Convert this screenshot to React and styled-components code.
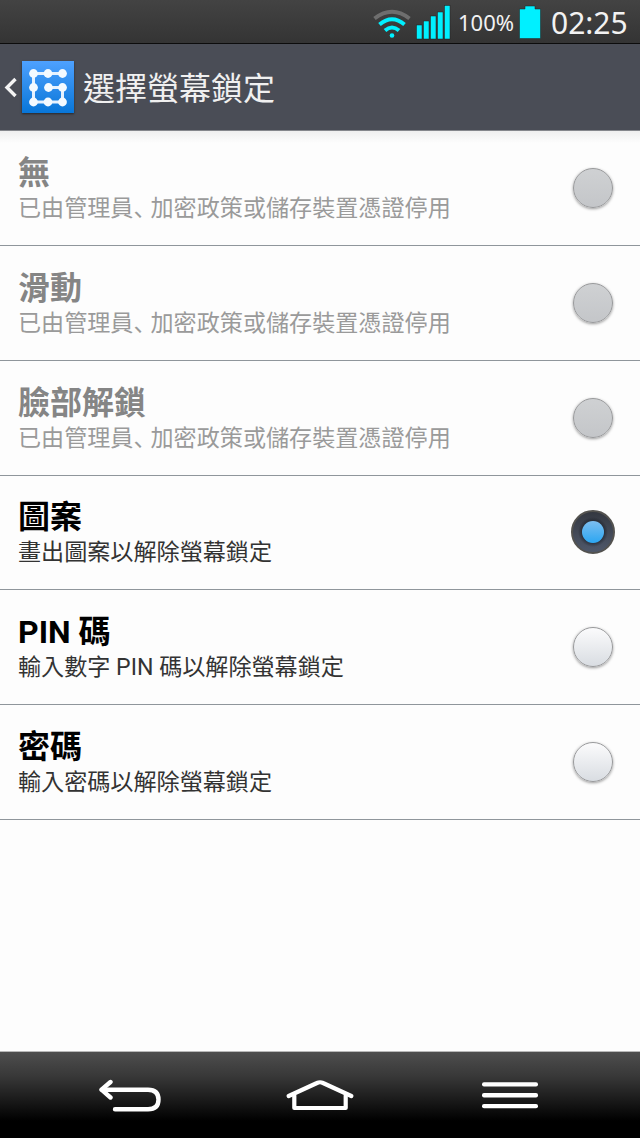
import React from "react";
import styled, { createGlobalStyle, css } from "styled-components";

const options = [
    { id: "none", title: "無", disabled: true },
    { id: "swipe", title: "滑動", disabled: true },
    { id: "face", title: "臉部解鎖", disabled: true },
    { id: "pattern", title: "圖案", summary: "畫出圖案以解除螢幕鎖定", checked: true },
    { id: "pin", title: "PIN 碼", summary: "輸入數字 PIN 碼以解除螢幕鎖定" },
    { id: "password", title: "密碼", summary: "輸入密碼以解除螢幕鎖定" },
];

const App = () => {
    return (
        <>
            <GlobalStyle />
            <Screen>
                <StatusBar>
                    <WifiIcon />
                    <SignalIcon />
                    <Percent>100%</Percent>
                    <BatteryIcon />
                    <Clock>02:25</Clock>
                </StatusBar>
                <Header>
                    <BackArrow />
                    <PatternLogo />
                    <h1>選擇螢幕鎖定</h1>
                </Header>
                <List>
                    {options.map((option) => (
                        <Row key={option.id}>
                            <Label>
                                <Title $disabled={option.disabled}>{option.title}</Title>
                                <Summary $disabled={option.disabled}>
                                    {option.disabled ? (
                                        <>已由管理員<Comma>、</Comma>加密政策或儲存裝置憑證停用</>
                                    ) : (
                                        option.summary
                                    )}
                                </Summary>
                            </Label>
                            <Radio $disabled={option.disabled} $checked={option.checked} />
                        </Row>
                    ))}
                </List>
                <NavBar>
                    <NavIcons />
                </NavBar>
            </Screen>
        </>
    );
};

const WifiIcon = () => (
    <svg width="40" height="32" viewBox="0 0 40 32" fill="none" strokeWidth="4">
        <path d="M2.5 12.5 Q20 -1 37.5 12.5" stroke="#6e6e6e" />
        <path d="M7.5 18.5 Q20 8 32.5 18.5" stroke="#00f0ff" />
        <path d="M13 24.5 Q20 18.5 27 24.5" stroke="#00f0ff" />
        <circle cx="20" cy="29.5" r="2.3" fill="#00f0ff" />
    </svg>
);

const SignalIcon = () => (
    <svg width="36" height="36" viewBox="0 0 36 36" fill="#00f0ff" stroke="#222" strokeWidth="0.5">
        <rect x="0.5" y="21" width="5.5" height="14" />
        <rect x="7.5" y="17" width="5.5" height="18" />
        <rect x="14.5" y="12" width="5.5" height="23" />
        <rect x="21.5" y="8" width="5.5" height="27" />
        <rect x="28.5" y="1.5" width="5.5" height="33.5" />
    </svg>
);

const BatteryIcon = () => (
    <svg width="22" height="34" viewBox="0 0 22 34">
        <path d="M6 1H16V4H21.5V33.5H.5V4H6Z" fill="#00f0ff" stroke="#222" strokeWidth="0.5" />
    </svg>
);

const BackArrow = () => (
    <svg width="14" height="22" viewBox="0 0 14 22" fill="none">
        <path d="M12.5 3L4 11.5L12.5 20" stroke="#f4f4f4" strokeWidth="3.4" />
    </svg>
);

const dots = [
    [11.5, 12.5], [26, 12.5], [40.5, 12.5],
    [11.5, 26.5], [26.5, 26.5], [40.5, 26.5],
    [11.5, 41], [26, 41], [40.5, 41],
];

const PatternLogo = () => (
    <Logo viewBox="0 0 52 52">
        <defs>
            <linearGradient id="tile" x1="0" y1="0" x2="0" y2="1">
                <stop offset="0" stopColor="#4ea1ff" />
                <stop offset="1" stopColor="#0876d8" />
            </linearGradient>
        </defs>
        <rect width="52" height="52" fill="url(#tile)" />
        <path
            d="M40.5 12.5H11.5V41H40.5V26.5H26.5"
            fill="none"
            stroke="#e6f2ff"
            strokeWidth="3"
        />
        {dots.map(([x, y]) => (
            <circle key={`${x}-${y}`} cx={x} cy={y} r="4.4" fill="#f4faff" />
        ))}
    </Logo>
);

const NavIcons = () => (
    <>
        <svg width="64" height="34" viewBox="0 0 64 34" fill="none" stroke="#fff" strokeWidth="4.4" strokeLinecap="round" strokeLinejoin="round">
            <path d="M12.5 3L3.5 10.7L12.5 18.5" />
            <path d="M4 10.7H50Q60.5 10.7 60.5 20.5Q60.5 30.3 50 30.3H17" />
        </svg>
        <svg width="68" height="34" viewBox="0 0 68 34" fill="none" stroke="#fff" strokeWidth="4.2" strokeLinecap="round" strokeLinejoin="round">
            <path d="M2.7 17L31 4Q34 2.5 37 4L65.3 17" />
            <path d="M8.3 16.5V29H59.7V16.5" />
        </svg>
        <svg width="56" height="34" viewBox="0 0 56 34" fill="#fff">
            <rect y="3.3" width="56" height="4.3" rx="2" />
            <rect y="14.1" width="56" height="4.3" rx="2" />
            <rect y="24.9" width="56" height="4.3" rx="2" />
        </svg>
    </>
);

const GlobalStyle = createGlobalStyle`
    * {
        box-sizing: border-box;
        margin: 0;
        padding: 0;
    }
    body {
        background: #fdfdfd;
        font-family: Roboto, "Noto Sans CJK TC", sans-serif;
    }
    svg {
        display: block;
        flex-shrink: 0;
    }
`;

const Screen = styled.div`
    width: 640px;
    height: 1138px;
    display: flex;
    flex-direction: column;
    overflow: hidden;
`;

const StatusBar = styled.header`
    height: 44px;
    display: flex;
    align-items: center;
    justify-content: flex-end;
    padding-right: 12px;
    background: linear-gradient(#434343, #343434);
    border-bottom: 1px solid #0c0c0c;
    color: #f2f2f2;
    font-family: "Noto Sans", sans-serif;
    white-space: nowrap;
    svg + svg {
        margin-left: 4px;
    }
`;

const Percent = styled.span`
    width: 56px;
    margin: 0 5px 0 6px;
    padding-top: 1px;
    font-size: 22px;
`;

const Clock = styled.time`
    width: 77px;
    margin-left: 10px;
    padding-top: 2px;
    font-size: 30px;
`;

const Header = styled.div`
    height: 87px;
    flex-shrink: 0;
    display: flex;
    align-items: center;
    padding-left: 3px;
    background: #4a4d56;
    border-bottom: 1px solid #85878c;
    h1 {
        margin-left: 9px;
        padding-top: 4px;
        color: #f0f0f0;
        font-size: 32px;
        font-weight: 400;
        line-height: 44px;
    }
`;

const Logo = styled.svg`
    width: 52px;
    height: 52px;
    margin-left: 5px;
    box-shadow: 0 1px 2px rgba(0, 0, 0, 0.5);
`;

const List = styled.main`
    flex: 1;
    background: linear-gradient(#efefef, #fdfdfd 12px);
`;

const Row = styled.div`
    height: 114.85px;
    display: flex;
    align-items: center;
    justify-content: space-between;
    padding: 0 25px 0 18px;
    border-bottom: 1px solid #8f969b;
`;

const Label = styled.div`
    padding-top: 4px;
    white-space: nowrap;
`;

const Title = styled.h2`
    height: 38px;
    color: ${(props) => (props.$disabled ? "#858585" : "#000")};
    font-size: 32px;
    font-weight: 700;
    line-height: 38px;
`;

const Summary = styled.p`
    height: 34px;
    color: ${(props) => (props.$disabled ? "#9a9a9a" : "#333")};
    font-size: 23.1px;
    line-height: 34px;
`;

const Comma = styled.span`
    margin-right: 5.5px;
    font-family: "Noto Sans CJK SC", sans-serif;
    font-feature-settings: "halt";
    line-height: 1;
`;

const Radio = styled.span`
    width: 40px;
    height: 40px;
    flex-shrink: 0;
    margin-right: 2px;
    border: 1px solid #98999b;
    border-radius: 50%;
    background: ${(props) =>
        props.$disabled ? "linear-gradient(#cfd1d3, #c4c6c9)" : "linear-gradient(#fbfbfc, #d9dde2)"};
    box-shadow: 0 1px 3px rgba(0, 0, 0, 0.4);
    ${(props) =>
        props.$checked &&
        css`
            width: 44px;
            height: 44px;
            margin-right: 0;
            border: 2px solid #53524f;
            background:
                radial-gradient(circle at 50% 50%, transparent 10.5px, rgba(20, 24, 32, 0.5) 11px, transparent 15px),
                linear-gradient(#343841, #4f586a);
            box-shadow: none;
            display: flex;
            align-items: center;
            justify-content: center;
            &::after {
                content: "";
                width: 22px;
                height: 22px;
                border-radius: 50%;
                background: linear-gradient(#7cbef0, #2ba6f2);
            }
        `}
`;

const NavBar = styled.nav`
    height: 87px;
    flex-shrink: 0;
    display: flex;
    align-items: center;
    gap: 124px;
    padding: 1px 0 0 98px;
    border-top: 1px solid #b8b8b8;
    background: linear-gradient(#4e4e4e, #383838 28%, #000 80%);
    svg:last-child {
        margin-left: 4px;
    }
`;

export default App;
